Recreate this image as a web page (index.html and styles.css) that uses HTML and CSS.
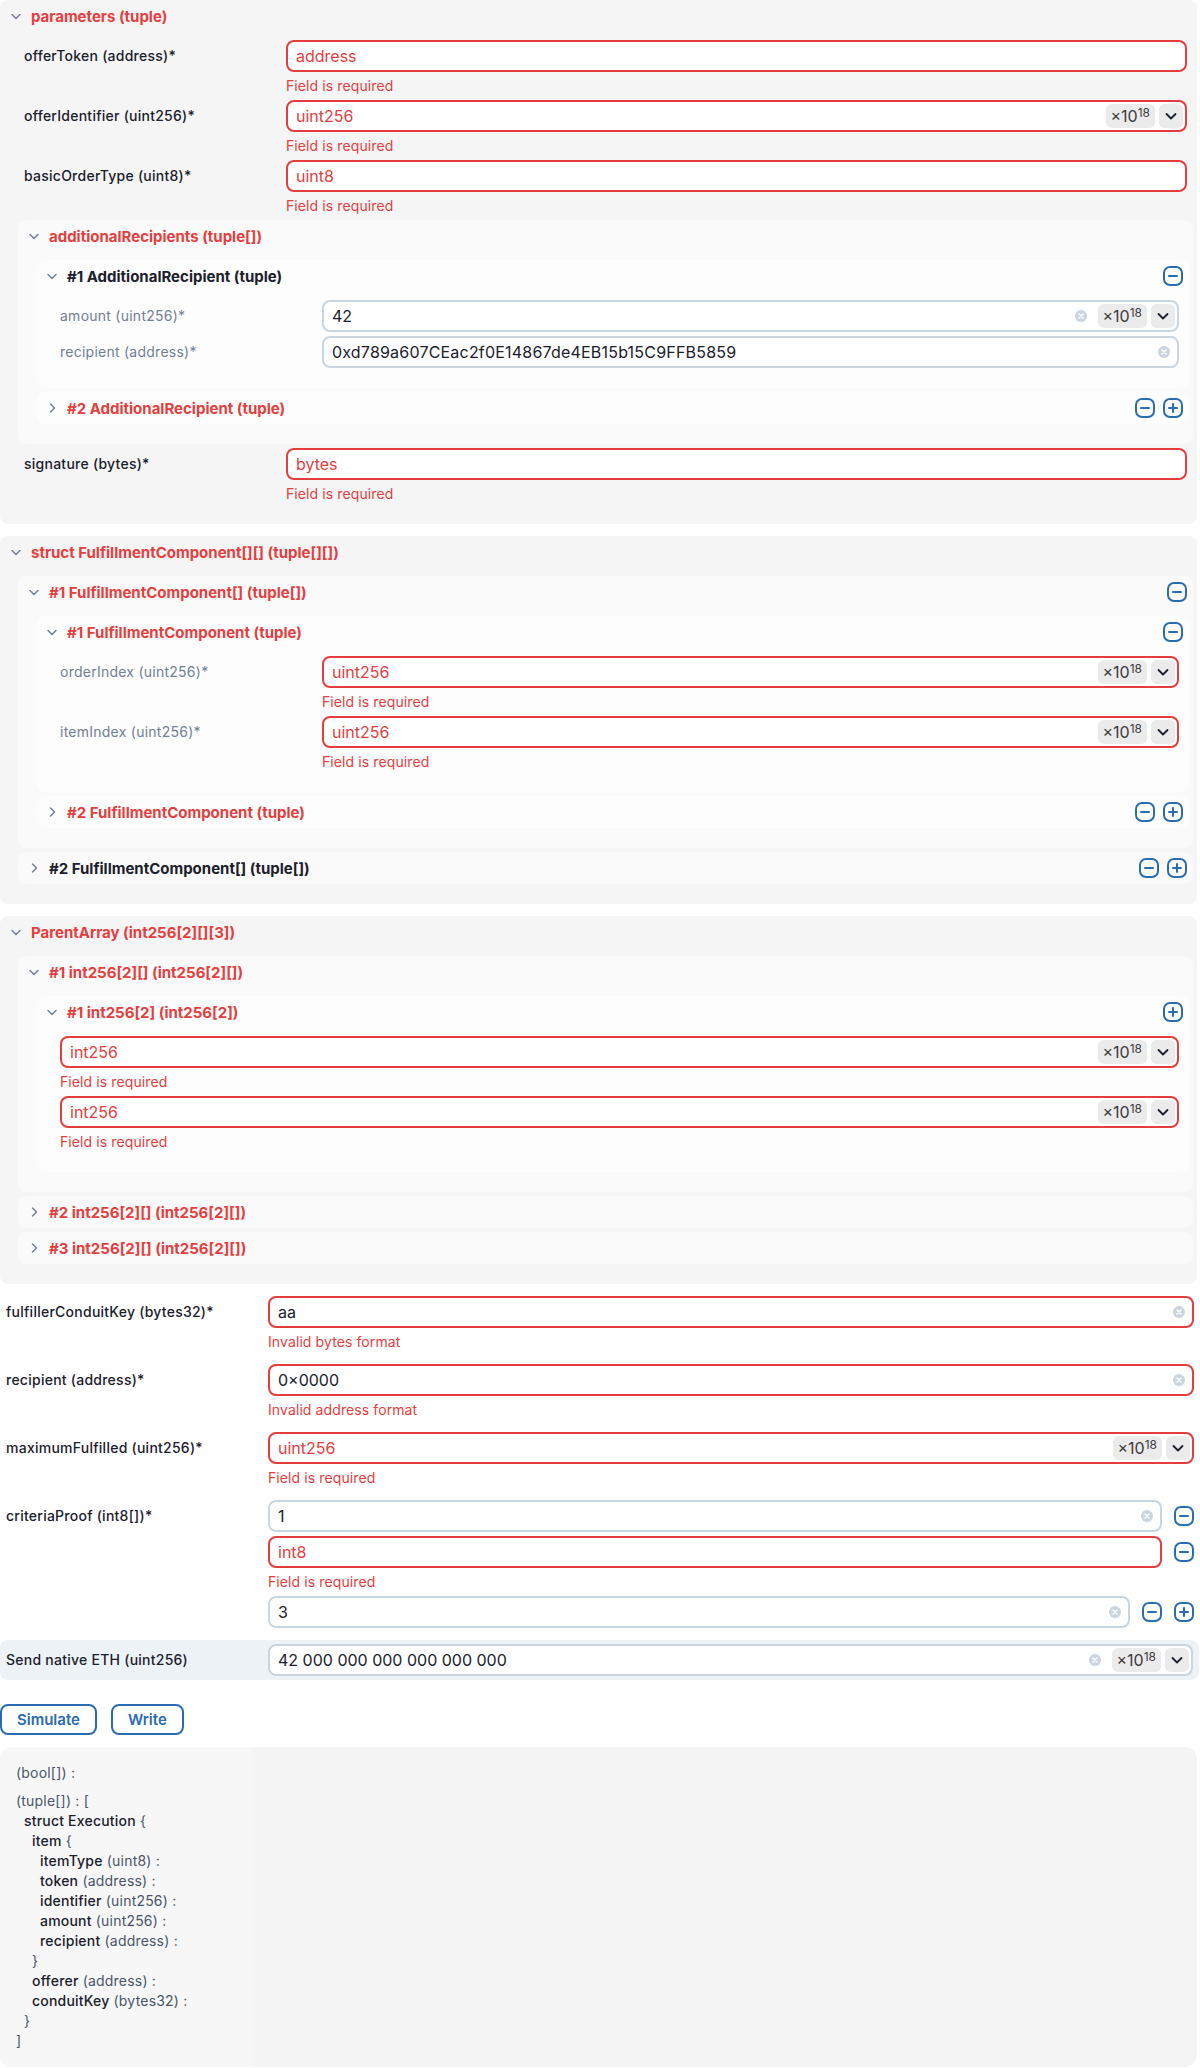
FILE: index.html
```html
<!DOCTYPE html>
<html>
<head>
<meta charset="utf-8">
<link rel="stylesheet" href="styles.css">
</head>
<body>
<div class="form">

  <!-- parameters -->
  <div class="acc l0">
    <div class="acc-head">
      <svg class="chev" width="12" height="12" viewBox="0 0 12 12"><path d="M2 4.5L6 8.5L10 4.5"/></svg>
      <span class="acc-title">parameters (tuple)</span>
    </div>
    <div class="acc-panel">
      <div class="field">
        <div class="label">offerToken (address)*</div>
        <div class="ctrl">
          <div class="input err"><span class="ph">address</span></div>
          <div class="error">Field is required</div>
        </div>
      </div>
      <div class="field">
        <div class="label">offerIdentifier (uint256)*</div>
        <div class="ctrl">
          <div class="input err"><span class="ph">uint256</span><span class="badge">×10<sup>18</sup></span><span class="dd"><svg width="12" height="12" viewBox="0 0 12 12"><path d="M1.5 4L6 8.5L10.5 4"/></svg></span></div>
          <div class="error">Field is required</div>
        </div>
      </div>
      <div class="field">
        <div class="label">basicOrderType (uint8)*</div>
        <div class="ctrl">
          <div class="input err"><span class="ph">uint8</span></div>
          <div class="error">Field is required</div>
        </div>
      </div>

      <div class="acc sub">
        <div class="acc-head">
          <svg class="chev" width="12" height="12" viewBox="0 0 12 12"><path d="M2 4.5L6 8.5L10 4.5"/></svg>
          <span class="acc-title">additionalRecipients (tuple[])</span>
        </div>
        <div class="acc-panel">
          <div class="acc sub">
            <div class="acc-head">
              <svg class="chev" width="12" height="12" viewBox="0 0 12 12"><path d="M2 4.5L6 8.5L10 4.5"/></svg>
              <span class="acc-title ok">#1 AdditionalRecipient (tuple)</span>
              <span class="acts">
                <svg class="ico" width="20" height="20" viewBox="0 0 20 20"><rect x="1" y="1" width="18" height="18" rx="6"/><path d="M6 10h8"/></svg>
              </span>
            </div>
            <div class="acc-panel">
              <div class="field">
                <div class="label sec">amount (uint256)*</div>
                <div class="ctrl">
                  <div class="input"><span class="val">42</span><svg class="clear before-badge" width="12" height="12" viewBox="0 0 12 12"><circle cx="6" cy="6" r="6"/><path d="M4 4l4 4M8 4l-4 4"/></svg><span class="badge">×10<sup>18</sup></span><span class="dd"><svg width="12" height="12" viewBox="0 0 12 12"><path d="M1.5 4L6 8.5L10.5 4"/></svg></span></div>
                </div>
              </div>
              <div class="field">
                <div class="label sec">recipient (address)*</div>
                <div class="ctrl">
                  <div class="input"><span class="val addr">0xd789a607CEac2f0E14867de4EB15b15C9FFB5859</span><svg class="clear" width="12" height="12" viewBox="0 0 12 12"><circle cx="6" cy="6" r="6"/><path d="M4 4l4 4M8 4l-4 4"/></svg></div>
                </div>
              </div>
            </div>
          </div>
          <div class="acc sub">
            <div class="acc-head">
              <svg class="chev" width="12" height="12" viewBox="0 0 12 12"><path d="M4.5 2L8.5 6L4.5 10"/></svg>
              <span class="acc-title">#2 AdditionalRecipient (tuple)</span>
              <span class="acts">
                <svg class="ico" width="20" height="20" viewBox="0 0 20 20"><rect x="1" y="1" width="18" height="18" rx="6"/><path d="M6 10h8"/></svg>
                <svg class="ico" width="20" height="20" viewBox="0 0 20 20"><rect x="1" y="1" width="18" height="18" rx="6"/><path d="M6 10h8M10 6v8"/></svg>
              </span>
            </div>
          </div>
        </div>
      </div>

      <div class="field">
        <div class="label">signature (bytes)*</div>
        <div class="ctrl">
          <div class="input err"><span class="ph">bytes</span></div>
          <div class="error">Field is required</div>
        </div>
      </div>
    </div>
  </div>

  <!-- struct FulfillmentComponent[][] -->
  <div class="acc l0">
    <div class="acc-head">
      <svg class="chev" width="12" height="12" viewBox="0 0 12 12"><path d="M2 4.5L6 8.5L10 4.5"/></svg>
      <span class="acc-title">struct FulfillmentComponent[][] (tuple[][])</span>
    </div>
    <div class="acc-panel">
      <div class="acc sub">
        <div class="acc-head">
          <svg class="chev" width="12" height="12" viewBox="0 0 12 12"><path d="M2 4.5L6 8.5L10 4.5"/></svg>
          <span class="acc-title">#1 FulfillmentComponent[] (tuple[])</span>
          <span class="acts">
            <svg class="ico" width="20" height="20" viewBox="0 0 20 20"><rect x="1" y="1" width="18" height="18" rx="6"/><path d="M6 10h8"/></svg>
          </span>
        </div>
        <div class="acc-panel">
          <div class="acc sub">
            <div class="acc-head">
              <svg class="chev" width="12" height="12" viewBox="0 0 12 12"><path d="M2 4.5L6 8.5L10 4.5"/></svg>
              <span class="acc-title">#1 FulfillmentComponent (tuple)</span>
              <span class="acts">
                <svg class="ico" width="20" height="20" viewBox="0 0 20 20"><rect x="1" y="1" width="18" height="18" rx="6"/><path d="M6 10h8"/></svg>
              </span>
            </div>
            <div class="acc-panel">
              <div class="field">
                <div class="label sec">orderIndex (uint256)*</div>
                <div class="ctrl">
                  <div class="input err"><span class="ph">uint256</span><span class="badge">×10<sup>18</sup></span><span class="dd"><svg width="12" height="12" viewBox="0 0 12 12"><path d="M1.5 4L6 8.5L10.5 4"/></svg></span></div>
                  <div class="error">Field is required</div>
                </div>
              </div>
              <div class="field">
                <div class="label sec">itemIndex (uint256)*</div>
                <div class="ctrl">
                  <div class="input err"><span class="ph">uint256</span><span class="badge">×10<sup>18</sup></span><span class="dd"><svg width="12" height="12" viewBox="0 0 12 12"><path d="M1.5 4L6 8.5L10.5 4"/></svg></span></div>
                  <div class="error">Field is required</div>
                </div>
              </div>
            </div>
          </div>
          <div class="acc sub">
            <div class="acc-head">
              <svg class="chev" width="12" height="12" viewBox="0 0 12 12"><path d="M4.5 2L8.5 6L4.5 10"/></svg>
              <span class="acc-title">#2 FulfillmentComponent (tuple)</span>
              <span class="acts">
                <svg class="ico" width="20" height="20" viewBox="0 0 20 20"><rect x="1" y="1" width="18" height="18" rx="6"/><path d="M6 10h8"/></svg>
                <svg class="ico" width="20" height="20" viewBox="0 0 20 20"><rect x="1" y="1" width="18" height="18" rx="6"/><path d="M6 10h8M10 6v8"/></svg>
              </span>
            </div>
          </div>
        </div>
      </div>
      <div class="acc sub">
        <div class="acc-head">
          <svg class="chev" width="12" height="12" viewBox="0 0 12 12"><path d="M4.5 2L8.5 6L4.5 10"/></svg>
          <span class="acc-title ok">#2 FulfillmentComponent[] (tuple[])</span>
          <span class="acts">
            <svg class="ico" width="20" height="20" viewBox="0 0 20 20"><rect x="1" y="1" width="18" height="18" rx="6"/><path d="M6 10h8"/></svg>
            <svg class="ico" width="20" height="20" viewBox="0 0 20 20"><rect x="1" y="1" width="18" height="18" rx="6"/><path d="M6 10h8M10 6v8"/></svg>
          </span>
        </div>
      </div>
    </div>
  </div>

  <!-- ParentArray -->
  <div class="acc l0">
    <div class="acc-head">
      <svg class="chev" width="12" height="12" viewBox="0 0 12 12"><path d="M2 4.5L6 8.5L10 4.5"/></svg>
      <span class="acc-title">ParentArray (int256[2][][3])</span>
    </div>
    <div class="acc-panel">
      <div class="acc sub">
        <div class="acc-head">
          <svg class="chev" width="12" height="12" viewBox="0 0 12 12"><path d="M2 4.5L6 8.5L10 4.5"/></svg>
          <span class="acc-title">#1 int256[2][] (int256[2][])</span>
        </div>
        <div class="acc-panel">
          <div class="acc sub">
            <div class="acc-head">
              <svg class="chev" width="12" height="12" viewBox="0 0 12 12"><path d="M2 4.5L6 8.5L10 4.5"/></svg>
              <span class="acc-title">#1 int256[2] (int256[2])</span>
              <span class="acts">
                <svg class="ico" width="20" height="20" viewBox="0 0 20 20"><rect x="1" y="1" width="18" height="18" rx="6"/><path d="M6 10h8M10 6v8"/></svg>
              </span>
            </div>
            <div class="acc-panel">
              <div class="item">
                <div class="input err"><span class="ph">int256</span><span class="badge">×10<sup>18</sup></span><span class="dd"><svg width="12" height="12" viewBox="0 0 12 12"><path d="M1.5 4L6 8.5L10.5 4"/></svg></span></div>
                <div class="error">Field is required</div>
              </div>
              <div class="item">
                <div class="input err"><span class="ph">int256</span><span class="badge">×10<sup>18</sup></span><span class="dd"><svg width="12" height="12" viewBox="0 0 12 12"><path d="M1.5 4L6 8.5L10.5 4"/></svg></span></div>
                <div class="error">Field is required</div>
              </div>
            </div>
          </div>
        </div>
      </div>
      <div class="acc sub">
        <div class="acc-head">
          <svg class="chev" width="12" height="12" viewBox="0 0 12 12"><path d="M4.5 2L8.5 6L4.5 10"/></svg>
          <span class="acc-title">#2 int256[2][] (int256[2][])</span>
        </div>
      </div>
      <div class="acc sub">
        <div class="acc-head">
          <svg class="chev" width="12" height="12" viewBox="0 0 12 12"><path d="M4.5 2L8.5 6L4.5 10"/></svg>
          <span class="acc-title">#3 int256[2][] (int256[2][])</span>
        </div>
      </div>
    </div>
  </div>

  <!-- top-level fields -->
  <div class="field top">
    <div class="label">fulfillerConduitKey (bytes32)*</div>
    <div class="ctrl">
      <div class="input err"><span class="val">aa</span><svg class="clear" width="12" height="12" viewBox="0 0 12 12"><circle cx="6" cy="6" r="6"/><path d="M4 4l4 4M8 4l-4 4"/></svg></div>
      <div class="error">Invalid bytes format</div>
    </div>
  </div>
  <div class="field top">
    <div class="label">recipient (address)*</div>
    <div class="ctrl">
      <div class="input err"><span class="val">0×0000</span><svg class="clear" width="12" height="12" viewBox="0 0 12 12"><circle cx="6" cy="6" r="6"/><path d="M4 4l4 4M8 4l-4 4"/></svg></div>
      <div class="error">Invalid address format</div>
    </div>
  </div>
  <div class="field top">
    <div class="label">maximumFulfilled (uint256)*</div>
    <div class="ctrl">
      <div class="input err"><span class="ph">uint256</span><span class="badge">×10<sup>18</sup></span><span class="dd"><svg width="12" height="12" viewBox="0 0 12 12"><path d="M1.5 4L6 8.5L10.5 4"/></svg></span></div>
      <div class="error">Field is required</div>
    </div>
  </div>
  <div class="field top">
    <div class="label">criteriaProof (int8[])*</div>
    <div class="ctrl arr">
      <div class="arr-row">
        <div class="input"><span class="val">1</span><svg class="clear" width="12" height="12" viewBox="0 0 12 12"><circle cx="6" cy="6" r="6"/><path d="M4 4l4 4M8 4l-4 4"/></svg></div>
        <svg class="ico" width="20" height="20" viewBox="0 0 20 20"><rect x="1" y="1" width="18" height="18" rx="6"/><path d="M6 10h8"/></svg>
      </div>
      <div class="item">
        <div class="arr-row">
          <div class="input err"><span class="ph">int8</span></div>
          <svg class="ico" width="20" height="20" viewBox="0 0 20 20"><rect x="1" y="1" width="18" height="18" rx="6"/><path d="M6 10h8"/></svg>
        </div>
        <div class="error">Field is required</div>
      </div>
      <div class="arr-row">
        <div class="input"><span class="val">3</span><svg class="clear" width="12" height="12" viewBox="0 0 12 12"><circle cx="6" cy="6" r="6"/><path d="M4 4l4 4M8 4l-4 4"/></svg></div>
        <svg class="ico" width="20" height="20" viewBox="0 0 20 20"><rect x="1" y="1" width="18" height="18" rx="6"/><path d="M6 10h8"/></svg>
        <svg class="ico" width="20" height="20" viewBox="0 0 20 20"><rect x="1" y="1" width="18" height="18" rx="6"/><path d="M6 10h8M10 6v8"/></svg>
      </div>
    </div>
  </div>
  <div class="field top send">
    <div class="label">Send native ETH (uint256)</div>
    <div class="ctrl">
      <div class="input"><span class="val">42 000 000 000 000 000 000</span><svg class="clear before-badge" width="12" height="12" viewBox="0 0 12 12"><circle cx="6" cy="6" r="6"/><path d="M4 4l4 4M8 4l-4 4"/></svg><span class="badge">×10<sup>18</sup></span><span class="dd"><svg width="12" height="12" viewBox="0 0 12 12"><path d="M1.5 4L6 8.5L10.5 4"/></svg></span></div>
    </div>
  </div>

  <div class="actions">
    <button class="btn sim">Simulate</button>
    <button class="btn wr">Write</button>
  </div>

  <div class="result">
    <div class="res-body">
      <div class="res-line t">(bool[]) :</div>
      <div class="res-group">
        <div class="res-line t">(tuple[]) : [</div>
        <div class="res-line i1"><span class="n">struct Execution</span> <span class="t">{</span></div>
        <div class="res-line i2"><span class="n">item</span> <span class="t">{</span></div>
        <div class="res-line i3"><span class="n">itemType</span> <span class="t">(uint8) :</span></div>
        <div class="res-line i3"><span class="n">token</span> <span class="t">(address) :</span></div>
        <div class="res-line i3"><span class="n">identifier</span> <span class="t">(uint256) :</span></div>
        <div class="res-line i3"><span class="n">amount</span> <span class="t">(uint256) :</span></div>
        <div class="res-line i3"><span class="n">recipient</span> <span class="t">(address) :</span></div>
        <div class="res-line i2 t">}</div>
        <div class="res-line i2"><span class="n">offerer</span> <span class="t">(address) :</span></div>
        <div class="res-line i2"><span class="n">conduitKey</span> <span class="t">(bytes32) :</span></div>
        <div class="res-line i1 t">}</div>
        <div class="res-line t">]</div>
      </div>
    </div>
  </div>

</div>
</body>
</html>
```

FILE: styles.css
```css
* { box-sizing: border-box; }

body {
  margin: 0;
  font-family: Inter, "Noto Sans", sans-serif;
  font-size: 14px;
  letter-spacing: 0.1px;
  color: #1a202c;
  background: #ffffff;
}

.form {
  width: 1200px;
  display: flex;
  flex-direction: column;
  gap: 12px;
}

/* accordion blocks */
.acc {
  display: flex;
  flex-direction: column;
  border-radius: 8px;
}
.acc.l0 {
  background: #f5f5f5;
  margin-right: 3px;
}
.acc.sub {
  background: rgba(255, 255, 255, 0.5);
}
.acc-head {
  height: 32px;
  display: flex;
  align-items: center;
  gap: 9px;
  padding: 0 6px 0 10px;
}
.chev path {
  fill: none;
  stroke: #718096;
  stroke-width: 1.5;
  stroke-linecap: round;
  stroke-linejoin: round;
}
.acc-title {
  flex: 1;
  font-size: 15px;
  font-weight: 700;
  letter-spacing: 0;
  color: #e53e3e;
  white-space: nowrap;
}
.acc-title.ok { color: #1a202c; }
.acts {
  display: flex;
  gap: 8px;
}
.ico {
  flex: none;
  fill: none;
  stroke: #2b6cb0;
  stroke-width: 2;
  stroke-linecap: round;
}
.acc-panel {
  display: flex;
  flex-direction: column;
  gap: 4px;
  padding: 8px 4px 20px 18px;
}

/* fields */
.field {
  display: grid;
  grid-template-columns: 250px 1fr;
  column-gap: 12px;
  padding: 0 6px;
}
.label {
  line-height: 32px;
  font-weight: 500;
  letter-spacing: 0.25px;
  white-space: nowrap;
}
.label.sec {
  color: #718096;
  font-weight: 400;
}
.ctrl {
  display: flex;
  flex-direction: column;
  min-width: 0;
}
.ctrl.arr { gap: 4px; }
.item {
  display: flex;
  flex-direction: column;
  padding: 0 6px;
}
.ctrl .item { padding: 0; }

.input {
  height: 32px;
  border: 2px solid #cbd5e0;
  border-radius: 8px;
  background: #ffffff;
  display: flex;
  align-items: center;
  padding: 0 2px 0 8px;
  font-size: 16px;
  letter-spacing: 0;
}
.input.err { border-color: #e53e3e; }
.val, .ph {
  flex: 1;
  white-space: nowrap;
  overflow: hidden;
}
.val { color: #1a202c; }
.val.addr { letter-spacing: 0.2px; }
.ph { color: #e53e3e; }

.clear {
  flex: none;
  margin-right: 5px;
}
.clear.before-badge { margin-right: 11px; }
.clear circle { fill: #cbd5e0; }
.clear path {
  stroke: #ffffff;
  stroke-width: 1.5;
  stroke-linecap: round;
}

.badge {
  flex: none;
  height: 24px;
  padding: 0 5px;
  border-radius: 6px;
  background: #ebebeb;
  color: #3a3a3a;
  font-size: 16px;
  line-height: 24px;
}
.badge sup {
  font-size: 12px;
  vertical-align: 5px;
  line-height: 0;
}
.dd {
  flex: none;
  width: 24px;
  height: 24px;
  margin-left: 4px;
  border-radius: 6px;
  background: #ebebeb;
  display: flex;
  align-items: center;
  justify-content: center;
}
.dd path {
  fill: none;
  stroke: #1a202c;
  stroke-width: 1.8;
  stroke-linecap: round;
  stroke-linejoin: round;
}

.error {
  margin-top: 4px;
  line-height: 20px;
  color: #e53e3e;
}

.arr-row {
  display: flex;
  align-items: center;
  gap: 12px;
}
.arr-row .input { flex: 1; }

.field.send {
  background: #edf2f7;
  border-radius: 8px;
  padding: 4px 6px;
  margin-right: 1px;
}

/* actions */
.actions {
  display: flex;
  gap: 14px;
  margin-top: 12px;
}
.btn {
  height: 31px;
  border: 2px solid #2b6cb0;
  border-radius: 8px;
  background: #ffffff;
  color: #2b6cb0;
  font-family: Inter, "Noto Sans", sans-serif;
  font-size: 15px;
  font-weight: 600;
  padding: 0 15px;
}

/* result */
.result {
  background: #f4f4f4;
  border-radius: 12px;
  margin-right: 3px;
  display: flex;
  overflow: hidden;
}
.res-body {
  width: 252px;
  background: #f7f7f7;
  padding: 16px;
  display: flex;
  flex-direction: column;
  gap: 8px;
  color: #4a5568;
}
.res-line {
  line-height: 20px;
  white-space: pre;
  letter-spacing: 0.2px;
}
.res-line .n {
  color: #1a202c;
  font-weight: 500;
}
.res-line .t { color: #4a5568; }
.res-line.i1 { padding-left: 8px; }
.res-line.i2 { padding-left: 16px; }
.res-line.i3 { padding-left: 24px; }
```
